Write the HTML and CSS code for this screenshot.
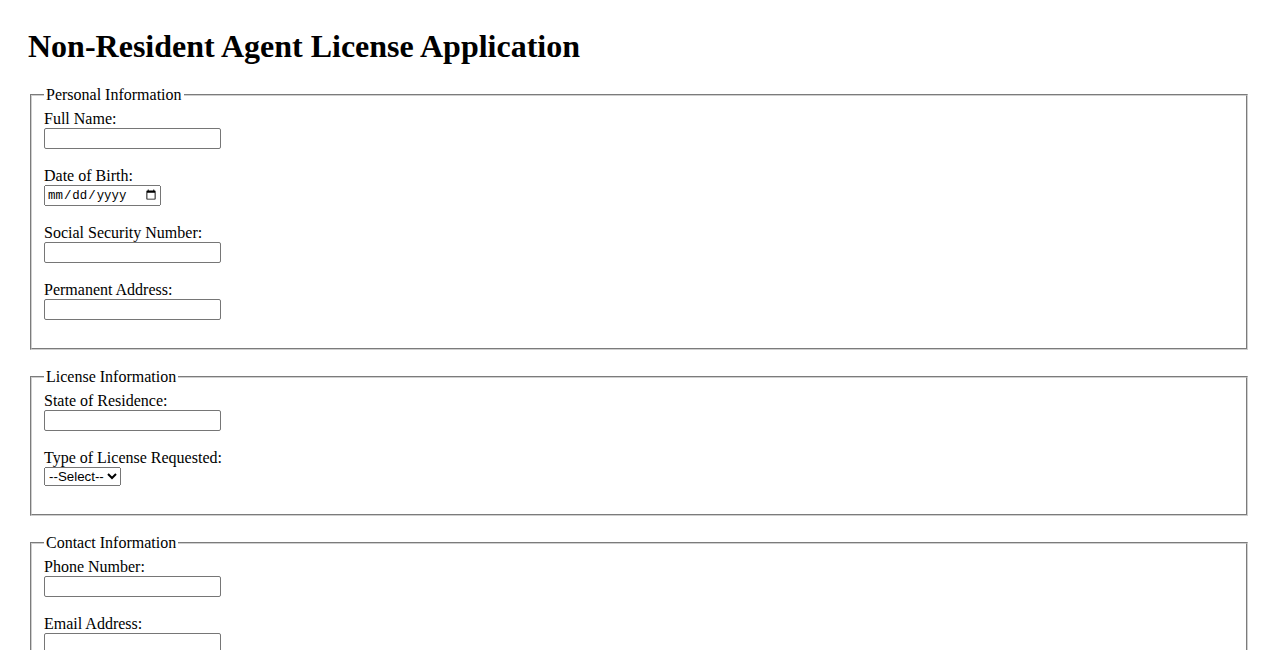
FILE: index.html
```html
<!DOCTYPE html>
<html lang="en">
<head>
  <meta charset="UTF-8" />
  <meta name="viewport" content="width=device-width, initial-scale=1.0" />
  <title>Non-Resident Agent License Application</title>
  <link rel="stylesheet" href="styles.css">
</head>
<body>
  <h1>Non-Resident Agent License Application</h1>

  <form>
    <!-- Personal Information -->
    <fieldset>
      <legend>Personal Information</legend>
      <label for="fullName">Full Name:</label><br>
      <input type="text" id="fullName" name="fullName"><br><br>

      <label for="dob">Date of Birth:</label><br>
      <input type="date" id="dob" name="dob"><br><br>

      <label for="ssn">Social Security Number:</label><br>
      <input type="text" id="ssn" name="ssn"><br><br>

      <label for="address">Permanent Address:</label><br>
      <input type="text" id="address" name="address"><br><br>
    </fieldset>

    <!-- License Information -->
    <fieldset>
      <legend>License Information</legend>
      <label for="state">State of Residence:</label><br>
      <input type="text" id="state" name="state"><br><br>

      <label for="licenseType">Type of License Requested:</label><br>
      <select id="licenseType" name="licenseType">
        <option value="">--Select--</option>
        <option value="life">Life</option>
        <option value="health">Health</option>
        <option value="property">Property</option>
        <option value="casualty">Casualty</option>
      </select><br><br>
    </fieldset>

    <!-- Contact Information -->
    <fieldset>
      <legend>Contact Information</legend>
      <label for="phone">Phone Number:</label><br>
      <input type="text" id="phone" name="phone"><br><br>

      <label for="email">Email Address:</label><br>
      <input type="email" id="email" name="email"><br><br>
    </fieldset>
  </form>
</body>
</html>
```

FILE: styles.css
```css
body {
  font-family: "Liberation Serif", "Times New Roman", serif;
  margin: 28px;
  color: #000;
  background: #fff;
}

h1 {
  font-size: 2em;
  margin: 0 0 21px;
}

fieldset {
  margin: 0 2px 18.4px;
  border: 2px groove #cfcfcf;
  padding: 5.6px 12px 10px;
}

legend {
  padding: 0 2px;
}

input,
select {
  font-family: "Liberation Sans", Arial, sans-serif;
  font-size: 13.33px;
}

input[type="text"],
input[type="email"] {
  width: 177px;
  height: 21px;
  box-sizing: border-box;
  border: 1px solid #767676;
  border-radius: 2px;
  padding: 1px 2px;
}

input[type="date"] {
  font-family: "Liberation Mono", monospace;
  font-size: 12.4px;
}

select {
  width: 77px;
  height: 19px;
}
```
